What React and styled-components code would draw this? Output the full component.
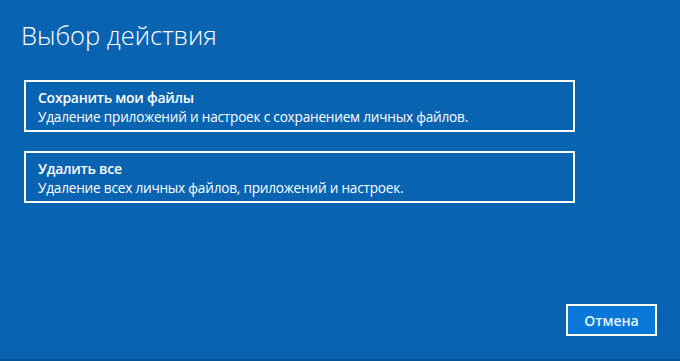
import React from "react";
import styled, { createGlobalStyle } from "styled-components";

const Global = createGlobalStyle`
  html, body { margin: 0; padding: 0; background: #0864b1; }
  * { box-sizing: border-box; }
`;

const Page = styled.div`
  width: 680px;
  height: 361px;
  background: #0864b1;
  border-bottom: 2px solid #06549a;
  font-family: "Open Sans", "Noto Sans", "Liberation Sans", sans-serif;
  color: #ffffff;
  display: flex;
  flex-direction: column;
  padding: 17px 0 0 21px;
`;

const Title = styled.h1`
  margin: 0;
  font-size: 25.5px;
  font-weight: 300;
  line-height: 36px;
  letter-spacing: 0;
`;

const Options = styled.div`
  display: flex;
  flex-direction: column;
  gap: 19px;
  margin: 27px 0 0 3px;
`;

const Option = styled.button`
  width: 551px;
  height: 52px;
  border: 2px solid #ffffff;
  background: transparent;
  color: #ffffff;
  font-family: inherit;
  text-align: left;
  padding: 6px 0 0 12px;
  display: flex;
  flex-direction: column;
  cursor: pointer;
`;

const OptionTitle = styled.span`
  font-size: 14px;
  font-weight: 600;
  line-height: 19px;
  letter-spacing: -0.25px;
`;

const OptionDesc = styled.span`
  font-size: 13.6px;
  font-weight: 400;
  line-height: 20px;
  letter-spacing: -0.2px;
`;

const Footer = styled.div`
  margin-top: auto;
  display: flex;
  justify-content: flex-end;
  padding: 0 23px 23px 0;
`;

const CancelButton = styled.button`
  width: 91px;
  height: 32px;
  border: 2px solid #ffffff;
  background: #0a78d8;
  color: #e8f4ff;
  font-family: inherit;
  font-size: 14px;
  font-weight: 600;
  cursor: pointer;
`;

export default function App() {
  return (
    <>
      <Global />
      <Page>
        <Title>Выбор действия</Title>
        <Options>
          <Option>
            <OptionTitle>Сохранить мои файлы</OptionTitle>
            <OptionDesc>Удаление приложений и настроек с сохранением личных файлов.</OptionDesc>
          </Option>
          <Option>
            <OptionTitle>Удалить все</OptionTitle>
            <OptionDesc>Удаление всех личных файлов, приложений и настроек.</OptionDesc>
          </Option>
        </Options>
        <Footer>
          <CancelButton>Отмена</CancelButton>
        </Footer>
      </Page>
    </>
  );
}
